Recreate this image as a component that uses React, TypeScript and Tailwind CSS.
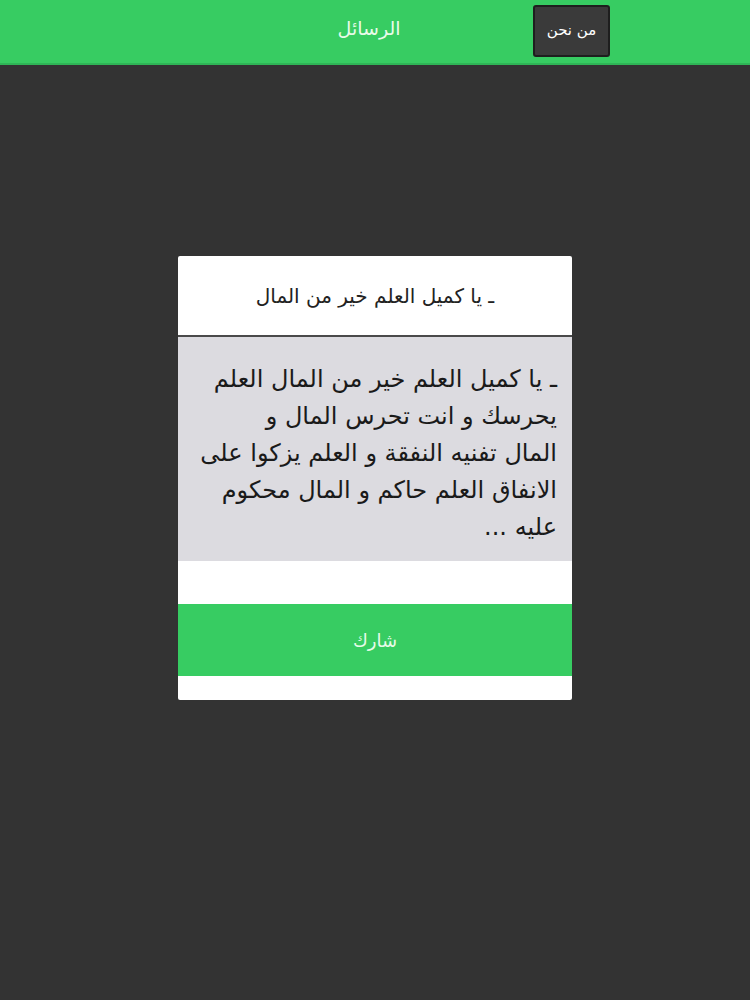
import React from 'react';

const lines = [
    'ـ يا كميل العلم خير من المال العلم',
    'يحرسك و انت تحرس المال و',
    'المال تفنيه النفقة و العلم يزكوا على',
    'الانفاق العلم حاكم و المال محكوم',
    'عليه ...',
];

export default function App() {
    return (
        <div className="w-[750px] h-[1000px] bg-[#333333] flex flex-col" style={{ fontFamily: '"DejaVu Sans", "Liberation Sans", sans-serif' }}>
            {/* Header */}
            <div className="h-[65px] bg-[#37cc62] border-b-2 border-[#2fb556] flex items-center shrink-0">
                <span dir="rtl" className="ml-[336px] w-[66px] text-center text-[#e8fbe9] text-[19px] -mt-[6px]">الرسائل</span>
                <button dir="rtl" className="ml-[131px] w-[77px] h-[52px] -mt-[2px] bg-[#3a3a3a] border-2 border-[#1e1e1e] rounded-[3px] text-white text-[15px]">
                    من نحن
                </button>
            </div>

            {/* Card */}
            <div className="flex-1 flex justify-center pt-[191px]">
                <div dir="rtl" className="w-[394px] h-[444px] bg-white rounded-[2px] flex flex-col">
                    <div className="h-[79px] flex items-center justify-center text-[20px] text-[#222]">
                        ـ يا كميل العلم خير من المال
                    </div>
                    <div className="h-[2px] bg-[#4a4a4a]" />
                    <div className="h-[224px] bg-[#dcdbe0] pt-[24px] pr-[15px] text-[24px] leading-[37px] text-[#1a1a1a]">
                        {lines.map((l, i) => (
                            <div key={i} className="whitespace-nowrap">{l}</div>
                        ))}
                    </div>
                    <div className="h-[43px]" />
                    <button className="h-[72px] bg-[#37cc62] text-[#e8fbe9] text-[18px]">شارك</button>
                </div>
            </div>
        </div>
    );
}
